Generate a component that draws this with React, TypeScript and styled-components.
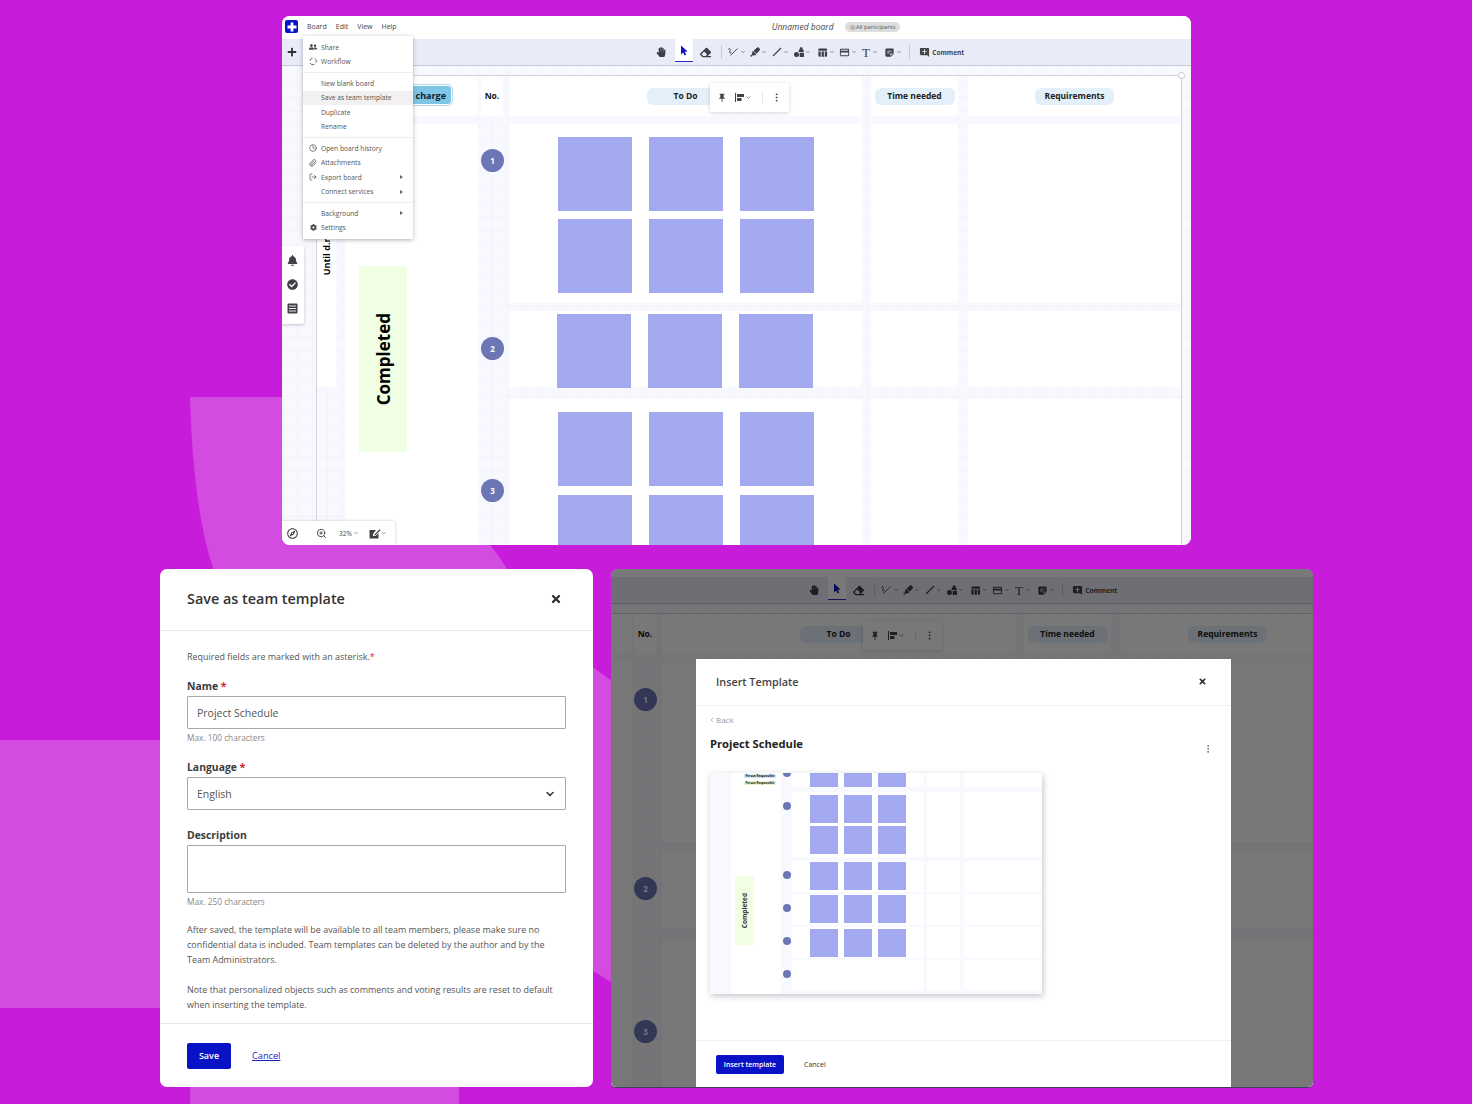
import * as React from "react";
import styled, { createGlobalStyle } from "styled-components";
import { FaBell, FaCheckCircle, FaCog, FaEraser, FaHandPaper, FaHighlighter, FaPlus, FaRegCompass, FaShapes, FaTimes, FaUserFriends } from "react-icons/fa";
import { FiChevronDown, FiChevronLeft, FiClock, FiLogOut, FiMoreVertical, FiPaperclip, FiZoomIn } from "react-icons/fi";
import { MdAddComment, MdCreditCard, MdPushPin, MdStickyNote2, MdTableChart } from "react-icons/md";

const GlobalStyle = createGlobalStyle`
	html, body {
		margin: 0;
		padding: 0;
		background: #c81cdb;
		font-family: "Open Sans", "Liberation Sans", sans-serif;
	}
`;

const Stage = styled.div`
	position: relative;
	width: 1472px;
	height: 1104px;
	overflow: hidden;
	background: #c81cdb;
	padding-top: 16px;
	box-sizing: border-box;
`;

const Backdrop = styled.svg`
	position: absolute;
	left: 0;
	top: 0;
`;

const TopWindow = styled.section`
	position: relative;
	width: 909px;
	height: 529px;
	margin-left: 282px;
	border-radius: 8px;
	overflow: hidden;
	background: #fff;
`;

const AppHeader = styled.header`
	display: flex;
	align-items: center;
	height: 23px;
	padding: 0 0 2px 3px;
	background: #fff;
	box-sizing: border-box;
`;

const LogoBox = styled.div`
	display: flex;
	align-items: center;
	justify-content: center;
	width: 13px;
	height: 13px;
	border-radius: 2px;
	background: #0a14c8;
	margin-right: 9px;
`;

const TopMenu = styled.span`
	font-size: 7px;
	color: #444;
	margin-right: 9px;
`;

const BoardTitle = styled.span`
	font-size: 8.5px;
	font-style: italic;
	color: #444;
	margin-left: 366px;
`;

const ParticipantsPill = styled.span`
	font-size: 5.7px;
	color: #555;
	background: #ddd;
	border-radius: 6px;
	padding: 2px 5px;
	margin-left: 11px;
	line-height: 6px;
`;

const BoardShell = styled.div<{ $height: number }>`
	width: 909px;
	height: ${(p) => p.$height}px;
	flex: none;
	overflow: hidden;
	display: flex;
	flex-direction: column;
`;

const Toolbar = styled.div`
	display: flex;
	align-items: stretch;
	flex: none;
	height: 27px;
	background: #e9ecf8;
	border-bottom: 1px solid #c9cbd6;
	box-sizing: border-box;
	color: #3d3f46;
`;

const PlusSlot = styled.div`
	display: flex;
	align-items: center;
	justify-content: center;
	width: 20px;
	margin-right: 348px;
	color: #333;
`;

const ToolButton = styled.div<{ $active?: boolean }>`
	display: flex;
	align-items: center;
	justify-content: center;
	flex: none;
	box-sizing: border-box;
	width: ${(p) => (p.$active ? "18px" : "22.4px")};
	margin: ${(p) => (p.$active ? "0 2.2px 3px" : "0")};
	background: ${(p) => (p.$active ? "#fff" : "transparent")};
	border-bottom: ${(p) => (p.$active ? "1px solid #2a30c0" : "none")};
`;

const ToolDivider = styled.div`
	width: 1px;
	margin: 6px 4px 6px 4px;
	background: #c6c8d4;
`;

const ToolGroup = styled.div`
	display: flex;
	align-items: center;
	justify-content: flex-start;
	gap: 1px;
	width: 22.4px;
	flex: none;
	padding-left: 1px;
	box-sizing: border-box;
`;

const SerifT = styled.span`
	font-family: "Liberation Serif", serif;
	font-size: 13px;
	line-height: 13px;
	width: 9px;
	text-align: center;
`;

const CommentButton = styled.div`
	display: flex;
	align-items: center;
	gap: 2px;
	margin-left: 5px;
	font-size: 6.5px;
	font-weight: 700;
	color: #444;
`;

const Canvas = styled.div`
	position: relative;
	flex: 1;
	padding: 9px 8px 0 34px;
	background-color: #f8f9fe;
	background-image: linear-gradient(#f2f3fb 1px, transparent 1px), linear-gradient(90deg, #f2f3fb 1px, transparent 1px);
	background-size: 15px 15px;
`;

const Frame = styled.div`
	position: relative;
	display: flex;
	height: 100%;
	width: 866px;
	box-sizing: border-box;
	border: 1px solid #d2d3da;
	border-bottom: none;
`;

const FrameHandle = styled.span`
	position: absolute;
	right: -4px;
	top: -4px;
	width: 5px;
	height: 5px;
	border-radius: 50%;
	background: #fff;
	border: 1px solid #c4c5cc;
`;

const LaneColumn = styled.div`
	width: 28px;
	flex: none;
	padding-top: 48px;
	box-sizing: border-box;
`;

const LaneCard = styled.div`
	display: flex;
	align-items: flex-end;
	justify-content: center;
	width: 19px;
	height: 263px;
	background: #fff;
	padding-bottom: 112px;
	box-sizing: border-box;
`;

const VerticalText = styled.span<{ $size: number; $color?: string }>`
	writing-mode: vertical-rl;
	transform: rotate(180deg);
	white-space: nowrap;
	font-weight: 700;
	font-size: ${(p) => p.$size}px;
	color: ${(p) => p.$color || "#000"};
`;

const OwnerColumn = styled.div`
	width: 133px;
	flex: none;
	display: flex;
	flex-direction: column;
`;

const OwnerHead = styled.div`
	display: flex;
	align-items: center;
	justify-content: flex-end;
	height: 40px;
	padding: 0 27px 2px 0;
	box-sizing: border-box;
	background: #fff;
`;

const OwnerChip = styled.span`
	width: 110px;
	height: 18px;
	display: flex;
	align-items: center;
	justify-content: flex-end;
	padding-right: 5px;
	box-sizing: border-box;
	border-radius: 3px;
	background: #7fc6e6;
	outline: 1px solid #b7d9ea;
	outline-offset: 1px;
	font-size: 9px;
	font-weight: 700;
	color: #0c2430;
`;

const OwnerBody = styled.div`
	flex: 1;
	margin-top: 8px;
	padding: 142px 0 0 14px;
	background: #fff;
`;

const CompletedCard = styled.div`
	display: flex;
	align-items: center;
	justify-content: center;
	width: 48px;
	height: 186px;
	background: #f0ffe4;
`;

const TableArea = styled.div`
	flex: 1;
	display: flex;
	flex-direction: column;
`;

const Row = styled.div<{ $height: number; $gap?: number }>`
	display: flex;
	flex: none;
	height: ${(p) => p.$height}px;
	margin-top: ${(p) => p.$gap || 0}px;
`;

const NoCell = styled.div<{ $top?: number }>`
	width: 31px;
	flex: none;
	padding-top: ${(p) => p.$top || 0}px;
	box-sizing: border-box;
`;

const NoHeader = styled.div`
	display: flex;
	align-items: center;
	justify-content: center;
	width: 22px;
	height: 40px;
	margin-left: 3px;
	padding-bottom: 2px;
	box-sizing: border-box;
	background: #fff;
	font-size: 8.5px;
	font-weight: 700;
	color: #111;
`;

const Circle = styled.div`
	display: flex;
	align-items: center;
	justify-content: center;
	width: 23px;
	height: 23px;
	margin-left: 3px;
	border-radius: 50%;
	background: #6c76b4;
	color: #fff;
	font-size: 8px;
	font-weight: 700;
`;

const Cell = styled.div<{ $width: number; $ml?: number }>`
	display: flex;
	align-items: center;
	justify-content: center;
	width: ${(p) => p.$width}px;
	flex: none;
	margin-left: ${(p) => p.$ml || 0}px;
	background: #fff;
`;

const HeadChip = styled.span<{ $width: number }>`
	display: block;
	width: ${(p) => p.$width}px;
	height: 17px;
	line-height: 16px;
	text-align: center;
	border-radius: 6px;
	background: #e3f0fa;
	font-size: 8.5px;
	font-weight: 700;
	color: #222;
`;

const SquareCell = styled.div<{ $top: number; $left: number; $rowGap: number }>`
	display: grid;
	grid-template-columns: repeat(3, 74px);
	grid-auto-rows: 74px;
	column-gap: 17px;
	row-gap: ${(p) => p.$rowGap}px;
	align-content: start;
	width: 353px;
	flex: none;
	box-sizing: border-box;
	padding: ${(p) => p.$top}px 0 0 ${(p) => p.$left}px;
	background: #fff;
`;

const Square = styled.div`
	background: #a2a9ee;
`;

const FloatingBar = styled.div`
	position: absolute;
	left: 428px;
	top: 17px;
	display: flex;
	align-items: center;
	width: 79px;
	height: 29px;
	box-sizing: border-box;
	padding-left: 7px;
	background: #fff;
	box-shadow: 0 1px 4px rgba(40, 40, 70, 0.2);
	color: #444;
`;

const FloatingSpacer = styled.span`
	width: 8px;
`;

const FloatingDivider = styled.span`
	width: 1px;
	height: 12px;
	margin: 0 8px 0 10px;
	background: #e6e6ea;
`;

const BoardMenu = styled.nav`
	position: absolute;
	left: 21px;
	top: 20px;
	width: 110px;
	height: 203px;
	padding-top: 4px;
	box-sizing: border-box;
	background: #fff;
	box-shadow: 0 1px 4px rgba(30, 30, 50, 0.35);
	color: #555;
`;

const MenuRow = styled.div<{ $selected?: boolean }>`
	display: flex;
	align-items: center;
	height: 14.5px;
	padding: 0 10px 0 6px;
	font-size: 6.7px;
	white-space: nowrap;
	background: ${(p) => (p.$selected ? "#f1f1f1" : "transparent")};
`;

const MenuIcon = styled.span`
	display: flex;
	align-items: center;
	justify-content: center;
	width: 8px;
	margin-right: 4px;
	color: #444;
`;

const MenuArrow = styled.span`
	margin-left: auto;
	width: 0;
	height: 0;
	border-left: 3px solid #666;
	border-top: 2px solid transparent;
	border-bottom: 2px solid transparent;
`;

const MenuLine = styled.div`
	height: 1px;
	margin: 3px 0;
	background: #eee;
`;

const SidePalette = styled.div`
	position: absolute;
	left: 0;
	top: 230px;
	display: flex;
	flex-direction: column;
	align-items: center;
	gap: 13px;
	width: 22px;
	height: 78px;
	padding: 9px 2px 0 0;
	box-sizing: border-box;
	background: #fff;
	border-radius: 0 2px 2px 0;
	box-shadow: 0 1px 3px rgba(30, 30, 50, 0.25);
	color: #3f4146;
`;

const ZoomBar = styled.div`
	position: absolute;
	left: 0;
	bottom: 0;
	display: flex;
	align-items: center;
	width: 113px;
	height: 24px;
	box-sizing: border-box;
	padding-left: 5px;
	background: #fff;
	border-radius: 0 2px 0 0;
	box-shadow: 0 0 3px rgba(30, 30, 50, 0.25);
	color: #3f4146;
`;

const ZoomSpacer = styled.span`
	width: 18px;
`;

const ZoomLabel = styled.span`
	display: flex;
	align-items: center;
	gap: 1px;
	font-size: 6.5px;
	color: #444;
	margin: 0 10px 0 12px;
`;

const BottomRow = styled.div`
	position: relative;
	display: flex;
	gap: 18px;
	margin-top: 24px;
	padding-left: 160px;
`;

const SaveDialog = styled.section`
	width: 433px;
	height: 518px;
	flex: none;
	display: flex;
	flex-direction: column;
	box-sizing: border-box;
	border-radius: 7px;
	background: #fff;
`;

const SaveHeader = styled.header`
	display: flex;
	align-items: center;
	justify-content: space-between;
	height: 62px;
	flex: none;
	padding: 0 31px 1px 27px;
	box-sizing: border-box;
	border-bottom: 1px solid #eaeaea;
`;

const SaveTitle = styled.h2`
	margin: 0 0 1px;
	font-size: 14.4px;
	font-weight: 600;
	color: #333;
`;

const SaveBody = styled.div`
	flex: 1;
	padding: 19px 27px 0;
	color: #555;
`;

const SmallNote = styled.p`
	margin: 0 0 16px;
	font-size: 8.95px;
	line-height: 13px;
`;

const Star = styled.span`
	color: #d8202a;
`;

const FieldLabel = styled.label`
	display: block;
	font-size: 10.4px;
	font-weight: 700;
	line-height: 15px;
	margin-bottom: 2px;
	color: #3c3c3c;
`;

const InputBox = styled.div<{ $height: number }>`
	display: flex;
	align-items: center;
	justify-content: space-between;
	height: ${(p) => p.$height}px;
	padding: 0 9px;
	box-sizing: border-box;
	border: 1px solid #a9a9a9;
	border-radius: 1px;
	font-size: 10.5px;
	color: #555;
`;

const HelpText = styled.div<{ $after: number }>`
	font-size: 8.3px;
	line-height: 12px;
	margin: 3px 0 ${(p) => p.$after}px;
	color: #888;
`;

const BodyText = styled.p<{ $after?: number }>`
	margin: 0 0 ${(p) => p.$after || 0}px;
	font-size: 8.95px;
	line-height: 15px;
	color: #555;
`;

const SaveFooter = styled.footer`
	display: flex;
	align-items: center;
	gap: 21px;
	height: 63px;
	flex: none;
	padding-left: 27px;
	border-top: 1px solid #e6e6e6;
`;

const PrimaryButton = styled.div<{ $width: number; $height: number; $size: number }>`
	display: flex;
	align-items: center;
	justify-content: center;
	width: ${(p) => p.$width}px;
	height: ${(p) => p.$height}px;
	border-radius: 2px;
	background: #0a12c6;
	color: #fff;
	font-size: ${(p) => p.$size}px;
	font-weight: 600;
`;

const CancelLink = styled.a`
	font-size: 9.2px;
	color: #1a22c0;
	text-decoration: underline;
`;

const DarkWindow = styled.section`
	position: relative;
	width: 702px;
	height: 518px;
	flex: none;
	padding-top: 8px;
	box-sizing: border-box;
	border-radius: 7px 7px 5px 5px;
	overflow: hidden;
	background: #fff;
	box-shadow: 0 1px 0 #3c4160;
`;

const ShiftedBoard = styled.div`
	margin-left: -176px;
`;

const DimLayer = styled.div`
	position: absolute;
	inset: 0;
	background: rgba(0, 0, 0, 0.53);
`;

const InsertModal = styled.div`
	position: absolute;
	left: 85px;
	top: 90px;
	bottom: 0;
	width: 535px;
	display: flex;
	flex-direction: column;
	background: #fff;
`;

const InsertHeader = styled.header`
	display: flex;
	align-items: center;
	justify-content: space-between;
	height: 47px;
	flex: none;
	padding: 0 24px 2px 20px;
	box-sizing: border-box;
	border-bottom: 1px solid #f0f0f0;
`;

const InsertTitle = styled.h3`
	margin: 0;
	font-size: 10.8px;
	font-weight: 600;
	color: #444;
`;

const InsertBody = styled.div`
	flex: 1;
	padding: 8px 14px 0 14px;
`;

const BackLink = styled.div`
	display: flex;
	align-items: center;
	margin-left: -2px;
	font-size: 8px;
	color: #999;
	line-height: 12px;
`;

const TemplateHead = styled.div`
	display: flex;
	align-items: flex-start;
	justify-content: space-between;
	margin-top: 10px;
	padding-right: 4px;
	height: 37px;
`;

const TemplateName = styled.div`
	font-size: 11.2px;
	font-weight: 700;
	line-height: 15px;
	color: #222;
`;

const MoreIcon = styled.div`
	margin-top: 1px;
	color: #666;
`;

const InsertFooter = styled.footer`
	display: flex;
	align-items: center;
	gap: 20px;
	height: 47px;
	flex: none;
	padding-left: 20px;
	box-sizing: border-box;
	border-top: 1px solid #f0f0f0;
`;

const PlainCancel = styled.span`
	font-size: 7px;
	color: #333;
`;

const Preview = styled.div`
	display: flex;
	width: 332px;
	height: 221px;
	overflow: hidden;
	background: #f8f9fe;
	box-shadow: 1px 2px 6px rgba(40, 40, 70, 0.28);
`;

const PreviewOwner = styled.div`
	width: 50px;
	flex: none;
	margin-left: 21px;
	padding: 0 0 0 4px;
	box-sizing: border-box;
	background: #fff;
`;

const MiniChip = styled.div<{ $bg: string }>`
	width: 32px;
	height: 4px;
	margin: 1px 0 3px 9px;
	background: ${(p) => p.$bg};
	font-size: 3px;
	line-height: 4px;
	font-weight: 700;
	color: #111;
	white-space: nowrap;
	text-align: center;
`;

const MiniCompleted = styled.div`
	display: flex;
	align-items: center;
	justify-content: center;
	width: 19px;
	height: 69px;
	margin-top: 91px;
	background: #f0ffe4;
`;

const PreviewRows = styled.div`
	flex: 1;
	display: flex;
	flex-direction: column;
`;

const MiniRow = styled.div<{ $height: number; $gap: number }>`
	display: flex;
	flex: none;
	height: ${(p) => p.$height}px;
	margin-top: ${(p) => p.$gap}px;
`;

const MiniNo = styled.div`
	width: 11px;
	flex: none;
	display: flex;
	justify-content: center;
`;

const MiniDot = styled.span<{ $top: number }>`
	width: 8px;
	height: 8px;
	margin-top: ${(p) => p.$top}px;
	border-radius: 50%;
	background: #6c76b4;
`;

const MiniTodo = styled.div<{ $top: number }>`
	display: grid;
	grid-template-columns: repeat(3, 28px);
	grid-auto-rows: 28px;
	column-gap: 6px;
	row-gap: 3px;
	align-content: start;
	width: 132px;
	flex: none;
	overflow: hidden;
	padding: ${(p) => p.$top}px 0 0 18px;
	box-sizing: border-box;
	background: #fff;
`;

const MiniBlank = styled.div<{ $width: number; $ml: number }>`
	width: ${(p) => p.$width}px;
	margin-left: ${(p) => p.$ml}px;
	flex: none;
	background: #fff;
`;

// small drawings the icon packs don't have
const CursorIcon = () => (
	<svg width="10" height="11" viewBox="0 0 10 11">
		<path d="M2 0.5 V9.5 L4.2 7.4 L5.6 10.5 L7.2 9.8 L5.8 6.8 L8.6 6.6 Z" fill="#1212c8" />
	</svg>
);

const PenIcon = () => (
	<svg width="12" height="10" viewBox="0 0 12 10" fill="none" stroke="currentColor" strokeWidth="0.9">
		<path d="M1 2.5 C3 1 4 2 3 4 C2 6 3 6.5 4.5 5.5 M3.5 8.5 L10.5 1.5" />
	</svg>
);

const LineIcon = () => (
	<svg width="10" height="10" viewBox="0 0 10 10" stroke="currentColor" strokeWidth="1.1">
		<path d="M1 9 L9 1" />
	</svg>
);

const AlignIcon = () => (
	<svg width="10" height="9" viewBox="0 0 10 9" fill="currentColor">
		<rect x="0" y="0" width="1" height="9" />
		<rect x="2" y="1" width="7" height="3" />
		<rect x="2" y="5" width="4.5" height="3" />
	</svg>
);

const ListIcon = () => (
	<svg width="11" height="11" viewBox="0 0 11 11">
		<rect x="0.5" y="0.5" width="10" height="10" rx="1" fill="currentColor" />
		<path d="M2 3 H9 M2 5.5 H9 M2 8 H9" stroke="#fff" strokeWidth="0.9" />
	</svg>
);

const NoteEditIcon = () => (
	<svg width="12" height="11" viewBox="0 0 12 11">
		<path d="M0.5 2 H7 L4 6 V8 H6.5 L9.5 5 V10.5 H0.5 Z" fill="currentColor" />
		<path d="M5 7 L10.5 1.2 L11.5 2.2 L6 7.6 Z" fill="currentColor" />
	</svg>
);

const WorkflowIcon = () => (
	<svg width="9" height="9" viewBox="0 0 9 9" fill="none" stroke="currentColor" strokeWidth="0.9">
		<path d="M6.8 1.2 A3.6 3.6 0 0 1 7.9 5.6 M6 7.8 A3.6 3.6 0 0 1 1.2 6.2 M0.9 3.6 A3.6 3.6 0 0 1 4 0.9" />
	</svg>
);

const LogoPlus = () => (
	<svg width="10" height="10" viewBox="0 0 10 10" fill="#fff">
		<path d="M3.6 0.5 H6.4 V3.6 H9.5 V6.4 H6.4 V9.5 H3.6 V6.4 H0.5 V3.6 H3.6 Z" />
	</svg>
);

const rowSquares = (count: number) => Array.from({ length: count }, (_, i) => <Square key={i} />);

// the dark window shows the same board, panned right so its left lanes are out of view
function Board({ height, panned }: { height: number; panned?: boolean }) {
	const drift = panned ? 1 : 0;
	return (
		<BoardShell $height={height}>
			<Toolbar>
				<PlusSlot>
					<FaPlus size={10} />
				</PlusSlot>
				<ToolButton><FaHandPaper size={10} /></ToolButton>
				<ToolButton $active><CursorIcon /></ToolButton>
				<ToolButton><FaEraser size={11} /></ToolButton>
				<ToolDivider />
				<ToolGroup><PenIcon /><FiChevronDown size={6} /></ToolGroup>
				<ToolGroup><FaHighlighter size={10} /><FiChevronDown size={6} /></ToolGroup>
				<ToolGroup><LineIcon /><FiChevronDown size={6} /></ToolGroup>
				<ToolGroup><FaShapes size={10} /><FiChevronDown size={6} /></ToolGroup>
				<ToolGroup><MdTableChart size={11} /><FiChevronDown size={6} /></ToolGroup>
				<ToolGroup><MdCreditCard size={11} /><FiChevronDown size={6} /></ToolGroup>
				<ToolGroup><SerifT>T</SerifT><FiChevronDown size={6} /></ToolGroup>
				<ToolGroup><MdStickyNote2 size={11} /><FiChevronDown size={6} /></ToolGroup>
				<ToolDivider />
				<CommentButton>
					<MdAddComment size={11} />
					Comment
				</CommentButton>
			</Toolbar>
			<Canvas>
				<Frame>
					<FrameHandle />
					<LaneColumn>
						<LaneCard>
							{!panned && <VerticalText $size={9}>Until d.m.y</VerticalText>}
						</LaneCard>
					</LaneColumn>
					<OwnerColumn>
						<OwnerHead>
							<OwnerChip>{!panned && "charge"}</OwnerChip>
						</OwnerHead>
						<OwnerBody>
							<CompletedCard>
								{!panned && <VerticalText $size={17}>Completed</VerticalText>}
							</CompletedCard>
						</OwnerBody>
					</OwnerColumn>
					<TableArea>
						<Row $height={40}>
							<NoCell><NoHeader>No.</NoHeader></NoCell>
							<Cell $width={353}><HeadChip $width={78}>To Do</HeadChip></Cell>
							<Cell $width={87} $ml={9}><HeadChip $width={80}>Time needed</HeadChip></Cell>
							<Cell $width={213} $ml={10}><HeadChip $width={79}>Requirements</HeadChip></Cell>
						</Row>
						<Row $height={179} $gap={8 + drift}>
							<NoCell $top={25}><Circle>1</Circle></NoCell>
							<SquareCell $top={13} $left={49} $rowGap={8}>{rowSquares(6)}</SquareCell>
							<Cell $width={87} $ml={9} />
							<Cell $width={213} $ml={10} />
						</Row>
						<Row $height={76} $gap={8 + drift}>
							<NoCell $top={26}><Circle>2</Circle></NoCell>
							<SquareCell $top={3} $left={48} $rowGap={8}>{rowSquares(3)}</SquareCell>
							<Cell $width={87} $ml={9} />
							<Cell $width={213} $ml={10} />
						</Row>
						<Row $height={160} $gap={12 + drift}>
							<NoCell $top={80}><Circle>3</Circle></NoCell>
							<SquareCell $top={13} $left={49} $rowGap={9}>{rowSquares(6)}</SquareCell>
							<Cell $width={87} $ml={9} />
							<Cell $width={213} $ml={10} />
						</Row>
					</TableArea>
				</Frame>
				<FloatingBar>
					<MdPushPin size={10} />
					<FloatingSpacer />
					<AlignIcon />
					<FiChevronDown size={7} />
					<FloatingDivider />
					<FiMoreVertical size={11} />
				</FloatingBar>
			</Canvas>
		</BoardShell>
	);
}

function MainWindow() {
	return (
		<TopWindow>
			<AppHeader>
				<LogoBox><LogoPlus /></LogoBox>
				<TopMenu>Board</TopMenu>
				<TopMenu>Edit</TopMenu>
				<TopMenu>View</TopMenu>
				<TopMenu>Help</TopMenu>
				<BoardTitle>Unnamed board</BoardTitle>
				<ParticipantsPill>◎ All participants</ParticipantsPill>
			</AppHeader>
			<Board height={506} />
			<BoardMenu>
				<MenuRow><MenuIcon><FaUserFriends size={8} /></MenuIcon>Share</MenuRow>
				<MenuRow><MenuIcon><WorkflowIcon /></MenuIcon>Workflow</MenuRow>
				<MenuLine />
				<MenuRow><MenuIcon />New blank board</MenuRow>
				<MenuRow $selected><MenuIcon />Save as team template</MenuRow>
				<MenuRow><MenuIcon />Duplicate</MenuRow>
				<MenuRow><MenuIcon />Rename</MenuRow>
				<MenuLine />
				<MenuRow><MenuIcon><FiClock size={8} /></MenuIcon>Open board history</MenuRow>
				<MenuRow><MenuIcon><FiPaperclip size={8} /></MenuIcon>Attachments</MenuRow>
				<MenuRow><MenuIcon><FiLogOut size={8} /></MenuIcon>Export board<MenuArrow /></MenuRow>
				<MenuRow><MenuIcon />Connect services<MenuArrow /></MenuRow>
				<MenuLine />
				<MenuRow><MenuIcon />Background<MenuArrow /></MenuRow>
				<MenuRow><MenuIcon><FaCog size={7} /></MenuIcon>Settings</MenuRow>
			</BoardMenu>
			<SidePalette>
				<FaBell size={11} />
				<FaCheckCircle size={11} />
				<ListIcon />
			</SidePalette>
			<ZoomBar>
				<FaRegCompass size={11} />
				<ZoomSpacer />
				<FiZoomIn size={11} />
				<ZoomLabel>32%<FiChevronDown size={6} /></ZoomLabel>
				<NoteEditIcon />
				<FiChevronDown size={6} />
			</ZoomBar>
		</TopWindow>
	);
}

function SaveTemplateDialog() {
	return (
		<SaveDialog>
			<SaveHeader>
				<SaveTitle>Save as team template</SaveTitle>
				<FaTimes size={12} color="#333" />
			</SaveHeader>
			<SaveBody>
				<SmallNote>Required fields are marked with an asterisk.<Star>*</Star></SmallNote>
				<FieldLabel>Name <Star>*</Star></FieldLabel>
				<InputBox $height={33}>Project Schedule</InputBox>
				<HelpText $after={16}>Max. 100 characters</HelpText>
				<FieldLabel>Language <Star>*</Star></FieldLabel>
				<InputBox $height={33}>
					English
					<FiChevronDown size={12} strokeWidth={3} color="#333" />
				</InputBox>
				<HelpText $after={3}>&nbsp;</HelpText>
				<FieldLabel>Description</FieldLabel>
				<InputBox $height={48} />
				<HelpText $after={14}>Max. 250 characters</HelpText>
				<BodyText $after={15}>
					After saved, the template will be available to all team members, please make sure no
					confidential data is included. Team templates can be deleted by the author and by the
					Team Administrators.
				</BodyText>
				<BodyText>
					Note that personalized objects such as comments and voting results are reset to default
					when inserting the template.
				</BodyText>
			</SaveBody>
			<SaveFooter>
				<PrimaryButton $width={44} $height={26} $size={9}>Save</PrimaryButton>
				<CancelLink>Cancel</CancelLink>
			</SaveFooter>
		</SaveDialog>
	);
}

const miniRows = [
	{ height: 14, gap: 0, dotTop: -4, squares: 3, top: 0 },
	{ height: 65, gap: 5, dotTop: 10, squares: 6, top: 3 },
	{ height: 31, gap: 4, dotTop: 10, squares: 3, top: 1 },
	{ height: 31, gap: 2, dotTop: 10, squares: 3, top: 1 },
	{ height: 31, gap: 2, dotTop: 10, squares: 3, top: 2 },
	{ height: 30, gap: 2, dotTop: 10, squares: 0, top: 0 },
];

function TemplatePreview() {
	return (
		<Preview>
			<PreviewOwner>
				<MiniChip $bg="#cfe8f6">Person Responsible</MiniChip>
				<MiniChip $bg="#e6f7cf">Person Responsible</MiniChip>
				<MiniCompleted>
					<VerticalText $size={6.5} $color="#333">Completed</VerticalText>
				</MiniCompleted>
			</PreviewOwner>
			<PreviewRows>
				{miniRows.map((row, i) => (
					<MiniRow key={i} $height={row.height} $gap={row.gap}>
						<MiniNo><MiniDot $top={row.dotTop} /></MiniNo>
						<MiniTodo $top={row.top}>{rowSquares(row.squares)}</MiniTodo>
						<MiniBlank $width={33} $ml={3} />
						<MiniBlank $width={78} $ml={4} />
					</MiniRow>
				))}
			</PreviewRows>
		</Preview>
	);
}

function InsertTemplateWindow() {
	return (
		<DarkWindow>
			<ShiftedBoard>
				<Board height={510} panned />
			</ShiftedBoard>
			<DimLayer />
			<InsertModal>
				<InsertHeader>
					<InsertTitle>Insert Template</InsertTitle>
					<FaTimes size={9} color="#333" />
				</InsertHeader>
				<InsertBody>
					<BackLink><FiChevronLeft size={8} />Back</BackLink>
					<TemplateHead>
						<TemplateName>Project Schedule</TemplateName>
						<MoreIcon><FiMoreVertical size={10} /></MoreIcon>
					</TemplateHead>
					<TemplatePreview />
				</InsertBody>
				<InsertFooter>
					<PrimaryButton $width={68} $height={19} $size={7}>Insert template</PrimaryButton>
					<PlainCancel>Cancel</PlainCancel>
				</InsertFooter>
			</InsertModal>
		</DarkWindow>
	);
}

export default function App() {
	return (
		<Stage>
			<GlobalStyle />
			<Backdrop width="1472" height="1104" viewBox="0 0 1472 1104" fill="#d34be0">
				<path d="M190 397 H400 V545 H490 C497 553 502 561 506 567 C532 615 570 655 640 700 V1000 L593 971 L200 900 V600 L213 567 C200 530 192 470 190 397 Z" />
				<rect x="0" y="740" width="300" height="268" />
				<rect x="190" y="1060" width="269" height="44" />
			</Backdrop>
			<MainWindow />
			<BottomRow>
				<SaveTemplateDialog />
				<InsertTemplateWindow />
			</BottomRow>
		</Stage>
	);
}
